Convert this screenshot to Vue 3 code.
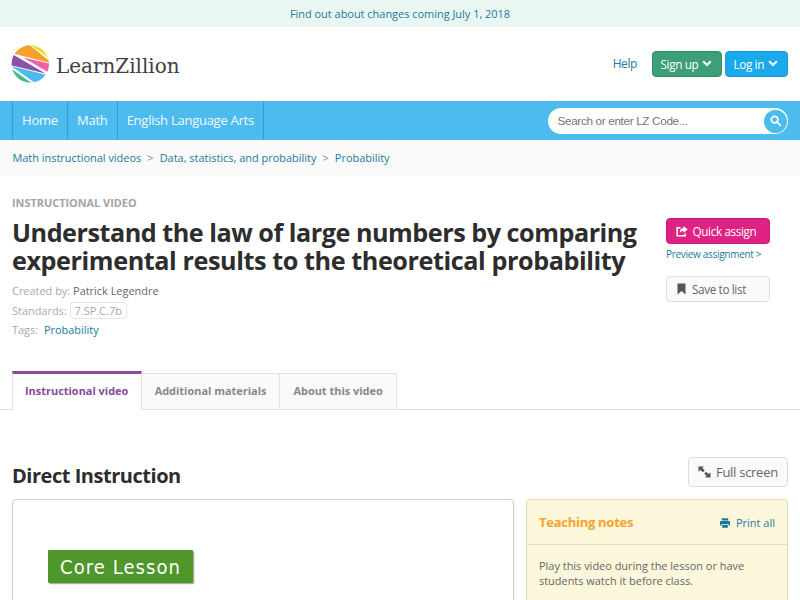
<template>
  <div class="page">
    <a class="notice" href="#">Find out about changes coming July 1, 2018</a>

    <header class="masthead">
      <svg class="logo" width="172" height="42" viewBox="0 0 172 42">
        <defs>
          <clipPath id="ball"><circle cx="19.3" cy="20" r="18.7" /></clipPath>
        </defs>
        <g clip-path="url(#ball)">
          <path d="M18.5 0.5 L24 -1 L40 2 V15.5 Z" fill="#e5df25" />
          <path d="M2 9.5 L10 -1 H16 L38.5 17 V19 Z" fill="#f8a02e" />
          <path d="M12 13.5 L40 20 V29.8 Z" fill="#ef62a5" />
          <path d="M-1 9.5 L2 10.5 L34.5 29.5 L-1 21 Z" fill="#8d50a6" />
          <path d="M0 22 L38.5 31.5 L27 41 Z" fill="#4bbbee" />
          <path d="M0 24.5 L22 40 H0 Z" fill="#45bd8b" />
        </g>
        <text x="45" y="29" textLength="123.5" lengthAdjust="spacingAndGlyphs">LearnZillion</text>
      </svg>
      <nav class="account">
        <a href="#">Help</a>
        <button class="btn green">Sign up <svg width="10" height="7" viewBox="0 0 10 7"><path d="M1.2 1.2 L5 5 L8.8 1.2" /></svg></button>
        <button class="btn blue">Log in <svg width="10" height="7" viewBox="0 0 10 7"><path d="M1.2 1.2 L5 5 L8.8 1.2" /></svg></button>
      </nav>
    </header>

    <nav class="main-nav">
      <div class="links">
        <a v-for="item in navItems" :key="item" href="#">{{ item }}</a>
      </div>
      <div class="search">
        <span>Search or enter LZ Code...</span>
        <button aria-label="Search">
          <svg width="12" height="12" viewBox="0 0 12 12"><circle cx="4.6" cy="4.6" r="3.3" /><path d="M7 7 L10.8 10.8" /></svg>
        </button>
      </div>
    </nav>

    <div class="breadcrumbs">
      <template v-for="(crumb, i) in crumbs" :key="crumb">
        <span v-if="i" class="sep">&gt;</span>
        <a href="#">{{ crumb }}</a>
      </template>
    </div>

    <section class="intro">
      <div class="info">
        <div class="kind">INSTRUCTIONAL VIDEO</div>
        <h1>
          <span>Understand the law of large numbers by comparing</span>
          <span>experimental results to the theoretical probability</span>
        </h1>
        <div class="meta">Created by: <b>Patrick Legendre</b></div>
        <div class="meta">Standards: <span class="standard">7.SP.C.7b</span></div>
        <div class="meta">Tags: <a href="#">Probability</a></div>
      </div>
      <div class="actions">
        <button class="btn pink">
          <svg width="12" height="11" viewBox="0 0 12 11">
            <path d="M4.5 1.8 H1.2 V9.8 H9.2 V7.5" fill="none" stroke="#fff" stroke-width="1.5" />
            <path d="M7.5 0 L11.7 3.5 L7.5 7 V5 C5.5 5 4.6 5.5 3.8 7 C3.7 3.8 5 2.3 7.5 2.1 Z" fill="#fff" />
          </svg>
          Quick assign
        </button>
        <a href="#">Preview assignment &gt;</a>
        <button class="btn light">
          <svg width="9" height="12" viewBox="0 0 9 12"><path d="M0.5 0.5 H8.5 V11.5 L4.5 8 L0.5 11.5 Z" fill="#555" /></svg>
          Save to list
        </button>
      </div>
    </section>

    <div class="tabs">
      <a v-for="tab in tabs" :key="tab" href="#" :class="{ active: tab === activeTab }" @click.prevent="activeTab = tab">{{ tab }}</a>
    </div>

    <div class="section-head">
      <h2>Direct Instruction</h2>
      <button class="btn light">
        <svg width="13" height="12" viewBox="0 0 13 12">
          <path d="M0.5 0.5 H6 L4.4 2.1 L6.8 4.5 L4.9 6.3 L2.4 3.9 L0.5 5.8 Z M12.5 11.5 H7 L8.6 9.9 L6.2 7.5 L8.1 5.7 L10.6 8.1 L12.5 6.2 Z" fill="#555" />
        </svg>
        Full screen
      </button>
    </div>

    <div class="columns">
      <div class="video">
        <svg class="lesson" width="148" height="36" viewBox="0 0 148 36">
          <rect x="1.3" y="1.3" width="145" height="33" rx="1" fill="#a9b3a2" />
          <rect width="145" height="33" rx="1" fill="#4f962b" />
          <text x="12" y="24" textLength="120" lengthAdjust="spacing">Core Lesson</text>
        </svg>
      </div>
      <aside class="notes">
        <div class="notes-head">
          <h3>Teaching notes</h3>
          <a href="#">
            <svg width="10" height="10" viewBox="0 0 10 10">
              <path d="M1.8 0.3 H8.2 V2.4 H1.8 Z M1 3 H9 Q10 3 10 4 V7.5 H8.5 V6 H1.5 V7.5 H0 V4 Q0 3 1 3 Z M2.2 6.7 H7.8 V9.7 H2.2 Z" fill="#16779c" />
            </svg>
            Print all
          </a>
        </div>
        <p>Play this video during the lesson or have<br>students watch it before class.</p>
      </aside>
    </div>
  </div>
</template>

<script setup>
import { ref } from 'vue';

const navItems = ['Home', 'Math', 'English Language Arts'];
const crumbs = ['Math instructional videos', 'Data, statistics, and probability', 'Probability'];
const tabs = ['Instructional video', 'Additional materials', 'About this video'];

const activeTab = ref(tabs[0]);
</script>

<style>
body {
  margin: 0;
  overflow: hidden;
}
</style>

<style scoped>
.page {
  width: 800px;
  height: 600px;
  overflow: hidden;
  background: #fff;
  color: #666;
  font: 11px/15px "Open Sans", sans-serif;
}

* {
  box-sizing: border-box;
}

svg {
  flex-shrink: 0;
}

a {
  color: #23799c;
  text-decoration: none;
}

h1, h2, h3, p {
  margin: 0;
}

.notice {
  display: block;
  height: 27px;
  font-size: 10.95px;
  line-height: 28px;
  text-align: center;
  background: #e9f6f2;
}

.masthead {
  display: flex;
  justify-content: space-between;
  height: 74px;
  padding: 17px 12px 0 11px;
}

.logo text {
  font: 20.5px "DejaVu Serif", serif;
  fill: #414042;
}

.account {
  display: flex;
  align-items: center;
  height: 39px;
  font-size: 12px;
  letter-spacing: -0.4px;
}

.account > a {
  margin-right: 15px;
}

.btn {
  display: flex;
  align-items: center;
  height: 26px;
  padding: 0 9px;
  border: 1px solid;
  border-radius: 4px;
  color: #fff;
  font: 11.7px "Open Sans", sans-serif;
  letter-spacing: -0.35px;
  white-space: nowrap;
}

.account .btn {
  justify-content: space-between;
  padding: 0 9px 0 7.5px;
}

.account .btn svg {
  fill: none;
  stroke: #fff;
  stroke-width: 2;
}

.green {
  width: 70px;
  margin-right: 3px;
  background: #3c9f78;
  border-color: #358c69;
}

.blue {
  width: 63px;
  background: #1aa9ea;
  border-color: #1997d1;
}

.main-nav {
  display: flex;
  justify-content: space-between;
  height: 39px;
  padding: 0 12px;
  background: #4dbbee;
}

.links {
  display: flex;
  border-left: 1px solid #2c9fd6;
}

.links a {
  padding: 0 9.1px;
  border-right: 1px solid #2c9fd6;
  color: #f2faff;
  font-size: 13px;
  letter-spacing: -0.26px;
  line-height: 39px;
}

.search {
  display: flex;
  justify-content: space-between;
  align-items: center;
  width: 240px;
  height: 26px;
  margin-top: 7px;
  padding: 0 1px 0 9.5px;
  border-radius: 13px;
  background: #fff;
  color: #757575;
  font: 11.7px "Liberation Sans", sans-serif;
  letter-spacing: -0.32px;
}

.search span {
  margin-top: -2px;
}

.search button {
  display: flex;
  align-items: center;
  justify-content: center;
  width: 23px;
  height: 23px;
  padding: 0;
  border: 0;
  border-radius: 50%;
  background: #4dbbee;
}

.search svg {
  fill: none;
  stroke: #fff;
  stroke-width: 1.7;
}

.breadcrumbs {
  display: flex;
  height: 36px;
  padding-left: 12.4px;
  background: #fafafa;
  font-size: 10.95px;
  line-height: 36px;
}

.sep {
  margin: 0 6.1px;
  color: #888;
}

.intro {
  display: flex;
  height: 195px;
  padding: 19px 12px 0;
}

.info {
  width: 654px;
}

.kind {
  color: #a3a3a3;
  font-size: 10.9px;
  font-weight: 700;
}

h1 {
  margin: 8px 0 9px;
  color: #2d2d2d;
  font-size: 25.2px;
  font-weight: 670;
  letter-spacing: -0.48px;
  line-height: 28px;
  white-space: nowrap;
}

h1 span {
  display: block;
  height: 28px;
}

h1 span + span {
  letter-spacing: -0.42px;
}

.meta {
  height: 19.5px;
  color: #aaa;
  font-size: 10.95px;
  line-height: 15px;
}

.meta b {
  color: #666;
  font-weight: 400;
}

.meta a {
  margin-left: 3px;
}

.standard {
  display: inline-block;
  height: 17px;
  margin-top: -1px;
  padding: 0 4px;
  border: 1px solid #e5e5e5;
  border-radius: 3px;
}

.actions {
  width: 104px;
  padding-top: 23px;
}

.actions .btn {
  width: 104px;
}

.actions .btn svg {
  margin-right: 4.5px;
}

.actions .light svg {
  margin: 0 6px 0 1px;
}

.actions a {
  display: block;
  margin: 3px 0 14px;
  font-size: 10px;
  letter-spacing: -0.3px;
  white-space: nowrap;
}

.pink {
  background: #df2384;
  border-color: #c91d75;
}

.light {
  background: #fafafa;
  border-color: #ddd;
  color: #666;
}

.tabs {
  display: flex;
  height: 39px;
  padding-left: 12px;
  align-items: flex-end;
  border-bottom: 1px solid #e2e2e2;
}

.tabs a {
  height: 36px;
  padding: 0 13px;
  border: 1px solid #e2e2e2;
  border-left: 0;
  border-bottom: 0;
  background: #fafafa;
  color: #888;
  font-size: 10.95px;
  font-weight: 700;
  line-height: 34px;
  white-space: nowrap;
}

.tabs .active {
  height: 39px;
  margin-bottom: -1px;
  padding: 0 12.3px 0 12px;
  border-left: 1px solid #e2e2e2;
  border-top: 3px solid #894b9d;
  background: #fff;
  color: #894b9d;
}

.section-head {
  display: flex;
  justify-content: space-between;
  height: 89px;
  padding: 47px 12px 0;
}

.section-head .btn {
  width: 100px;
  height: 30px;
  font-size: 13px;
  letter-spacing: -0.28px;
}

.section-head .btn svg {
  margin-right: 5px;
}

h2 {
  padding-top: 5px;
  color: #2d2d2d;
  font-size: 20px;
  font-weight: 660;
  letter-spacing: -0.47px;
  line-height: 28px;
}

.columns {
  display: flex;
  gap: 12px;
  padding: 0 12px;
}

.video {
  width: 502px;
  height: 120px;
  padding: 50px 0 0 35px;
  border: 1px solid #ccc;
  border-radius: 4px;
}

.lesson text {
  font: 20px "DejaVu Sans Condensed", "DejaVu Sans", sans-serif;
  fill: #fff;
}

.notes {
  width: 262px;
  height: 120px;
  border: 1px solid #e3dcb8;
  border-radius: 4px;
  background: #fcf7da;
}

.notes-head {
  display: flex;
  align-items: center;
  justify-content: space-between;
  height: 45px;
  padding: 0 12px;
  border-bottom: 1px solid #e3dcb8;
}

.notes-head a svg {
  margin-right: 3px;
  vertical-align: -1px;
}

h3 {
  color: #f5a32d;
  font-size: 13px;
  letter-spacing: -0.27px;
}

.notes p {
  padding: 13px 12px;
  font-size: 10.95px;
  white-space: nowrap;
}
</style>
